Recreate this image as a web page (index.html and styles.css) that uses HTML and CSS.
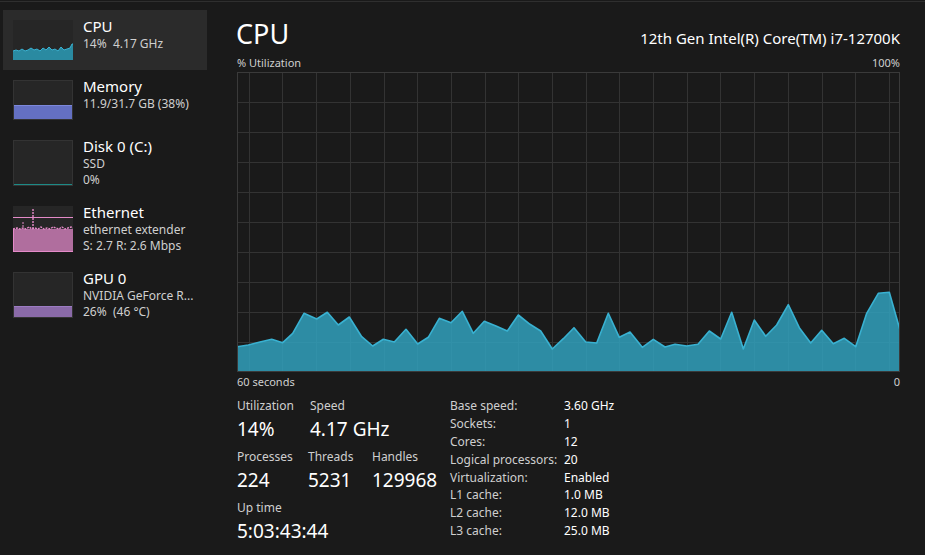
FILE: index.html
```html
<!DOCTYPE html>
<html lang="en">
<head>
    <meta charset="UTF-8">
    <meta name="viewport" content="width=device-width, initial-scale=1.0">
    <title>Task Manager - Performance</title>
    <link rel="stylesheet" href="styles.css">
</head>
<body>

<div class="app">
    <!-- device list -->
    <div class="sidebar">
        <div class="item selected">
            <svg class="thumb" width="60" height="40" viewBox="0 0 60 40">
                <polygon fill="#2a8aa1" points="0,31 3,30 6,31 9,29 12,31 15,30 18,28 21,30 24,29 27,31 30,28 33,30 36,27 39,30 42,29 45,31 48,27 51,30 54,29 57,28 59,24 60,24 60,40 0,40"/>
                <polyline fill="none" stroke="#3ab2d2" stroke-width="1" points="0,31 3,30 6,31 9,29 12,31 15,30 18,28 21,30 24,29 27,31 30,28 33,30 36,27 39,30 42,29 45,31 48,27 51,30 54,29 57,28 59,24 60,24"/>
            </svg>
            <div class="info">
                <div class="name">CPU</div>
                <div class="sub">14%&nbsp; 4.17 GHz</div>
            </div>
        </div>

        <div class="item">
            <div class="thumb box">
                <div class="fill mem" style="height: 38%"></div>
            </div>
            <div class="info">
                <div class="name">Memory</div>
                <div class="sub">11.9/31.7 GB (38%)</div>
            </div>
        </div>

        <div class="item tall">
            <div class="thumb box">
                <div class="fill disk" style="height: 1px"></div>
            </div>
            <div class="info">
                <div class="name">Disk 0 (C:)</div>
                <div class="sub">SSD</div>
                <div class="sub">0%</div>
            </div>
        </div>

        <div class="item tall">
            <svg class="thumb box" width="60" height="46" viewBox="0 0 60 46">
                <rect x="0" y="23" width="60" height="23" fill="#b06e9e"/>
                <polyline fill="none" stroke="#e48ac8" stroke-width="1.4" stroke-dasharray="2 1" points="0,23 4,22 7,23 10,22 13,23 16,21 19,23 22,22 25,23 28,21 31,23 34,22 37,23 40,21 43,22 46,23 49,21 52,23 55,22 58,21 60,22"/>
                <line x1="0" y1="11.5" x2="60" y2="11.5" stroke="#e48ac8" stroke-width="1"/>
                <line x1="20" y1="3" x2="20" y2="23" stroke="#e48ac8" stroke-width="1.4" stroke-dasharray="2 1"/>
                <line x1="10" y1="16" x2="10" y2="23" stroke="#e48ac8" stroke-width="1" stroke-dasharray="2 1"/>
                <line x1="0.5" y1="23" x2="0.5" y2="46" stroke="#e48ac8" stroke-width="1"/>
                <line x1="0" y1="45.5" x2="60" y2="45.5" stroke="#e48ac8" stroke-width="1"/>
            </svg>
            <div class="info">
                <div class="name">Ethernet</div>
                <div class="sub">ethernet extender</div>
                <div class="sub">S: 2.7 R: 2.6 Mbps</div>
            </div>
        </div>

        <div class="item tall">
            <div class="thumb box">
                <div class="fill gpu" style="height: 26%"></div>
            </div>
            <div class="info">
                <div class="name">GPU 0</div>
                <div class="sub">NVIDIA GeForce R...</div>
                <div class="sub">26%&nbsp; (46 °C)</div>
            </div>
        </div>
    </div>

    <!-- selected device details -->
    <div class="main">
        <div class="header">
            <div class="title">CPU</div>
            <div class="model">12th Gen Intel(R) Core(TM) i7-12700K</div>
        </div>

        <div class="axis top">
            <span>% Utilization</span>
            <span>100%</span>
        </div>

        <svg class="graph" id="graph" width="663" height="300" viewBox="0 0 663 300"></svg>

        <div class="axis">
            <span>60 seconds</span>
            <span>0</span>
        </div>

        <div class="details">
            <div class="stats">
                <div class="row">
                    <div class="stat w73"><div class="label">Utilization</div><div class="value">14%</div></div>
                    <div class="stat"><div class="label">Speed</div><div class="value">4.17 GHz</div></div>
                </div>
                <div class="row">
                    <div class="stat w71"><div class="label">Processes</div><div class="value">224</div></div>
                    <div class="stat w64"><div class="label">Threads</div><div class="value">5231</div></div>
                    <div class="stat"><div class="label">Handles</div><div class="value">129968</div></div>
                </div>
                <div class="row">
                    <div class="stat"><div class="label">Up time</div><div class="value">5:03:43:44</div></div>
                </div>
            </div>

            <div class="specs">
                <div class="key">Base speed:</div><div>3.60 GHz</div>
                <div class="key">Sockets:</div><div>1</div>
                <div class="key">Cores:</div><div>12</div>
                <div class="key">Logical processors:</div><div>20</div>
                <div class="key">Virtualization:</div><div>Enabled</div>
                <div class="key">L1 cache:</div><div>1.0 MB</div>
                <div class="key">L2 cache:</div><div>12.0 MB</div>
                <div class="key">L3 cache:</div><div>25.0 MB</div>
            </div>
        </div>
    </div>
</div>

<script>
    // last 60 samples of cpu usage, y in graph pixels (300 = 0%)
    var samples = [
        [0,274.7],[11.3,273],[23,270],[34.7,267.3],[45.7,270.7],[55.7,261.3],[67,241.3],[79.7,247],[90.3,240.3],
        [101.3,253],[112.3,245],[124.7,264.7],[135.7,274],[146.3,267.3],[157.3,270],[169,257.3],[180.7,272],
        [191.3,265.3],[202.3,246.3],[214,250.7],[225.3,239.3],[236.3,261.3],[247.3,249.3],[259,254],[270.3,259],
        [281.3,243],[293,252.3],[303.7,259],[315.3,277],[326.3,266.7],[337,255.7],[348.7,270],[359.7,271],
        [371.3,241.3],[382.3,265.3],[393,260],[405.3,275.3],[416.3,267.3],[428,275],[438,272.3],[449.7,274],
        [461,272.3],[472.3,259],[483.7,267],[494.7,240.3],[506.3,277],[517.3,248],[528.7,264.3],[539.7,253],
        [551.3,232.7],[562.3,255.7],[573.7,271],[584.7,258.3],[596.3,271.7],[607.3,266.3],[618.7,274.7],
        [629.7,241.3],[641.3,221.3],[652.3,220.3],[663,258]
    ];

    var svg = document.getElementById("graph");
    var html = "";

    // grid
    for (var y = 30; y < 300; y += 30) {
        html += '<line class="grid" x1="0" y1="' + (y + 0.5) + '" x2="663" y2="' + (y + 0.5) + '"/>';
    }
    for (var x = 11.7; x < 663; x += 33.7) {
        var gx = Math.round(x) + 0.5;
        html += '<line class="grid" x1="' + gx + '" y1="0" x2="' + gx + '" y2="300"/>';
    }

    var pts = samples.map(function (p) { return p[0] + "," + p[1]; }).join(" ");
    html += '<polygon class="area" points="0,300 ' + pts + ' 663,300"/>';
    html += '<polyline class="line" points="' + pts + '"/>';
    html += '<rect class="frame" x="0.5" y="0.5" width="662" height="299"/>';

    svg.innerHTML = html;
</script>

</body>
</html>
```

FILE: styles.css
```css
body { margin: 0; background: #1a1a1a; color: #fff; font-family: "Noto Sans", "Open Sans", sans-serif; overflow: hidden; }
.app { display: flex; margin-top: 1px; border-top: 1px solid #2f2f2f; height: 553px; }

.sidebar { width: 204px; padding: 8px 15px 0 3px; }
.item { display: flex; height: 60px; padding: 0 10px; box-sizing: border-box; }
.item.tall { height: 66px; }
.item.selected { background: #2b2b2b; }
.thumb { flex: none; width: 60px; height: 40px; margin-top: 10px; background: #262626; display: block; }
.item.tall .thumb { height: 46px; }
.box { position: relative; box-sizing: border-box; border: 1px solid #333; display: flex; flex-direction: column; justify-content: flex-end; }
.fill { width: 100%; box-sizing: border-box; }
.fill.mem { background: #6470c2; border-top: 1px solid #7c88dc; }
.fill.disk { background: #1d8a86; }
.fill.gpu { background: #8a6aa8; border-top: 1px solid #9c7cc4; }
svg.box { border: none; }

.info { margin-left: 10px; padding-top: 6px; white-space: nowrap; }
.name { font-size: 15px; line-height: 20px; }
.sub { font-size: 12px; line-height: 16px; color: #cfcfcf; }

.main { width: 663px; padding-left: 15px; }
.header { display: flex; justify-content: space-between; align-items: baseline; height: 50px; }
.title { font-size: 27px; line-height: 40px; margin-left: -1px; padding-top: 12px; }
.model { font-size: 15px; }
.axis { display: flex; justify-content: space-between; font-size: 11px; line-height: 20px; color: #cfcfcf; }
.axis.top { height: 20px; line-height: 22px; }
.graph { display: block; }
.grid { stroke: #333; stroke-width: 1; }
.frame { fill: none; stroke: #3a3a3a; stroke-width: 1; }
.area { fill: #31a0bb; opacity: 0.86; }
.line { fill: none; stroke: #39b1d1; stroke-width: 1.6; stroke-linejoin: round; }

.details { display: flex; margin-top: 6px; }
.stats { width: 213px; }
.row { display: flex; }
.stat { margin-bottom: 7px; }
.w73 { width: 73px; }
.w71 { width: 71px; }
.w64 { width: 64px; }
.label { font-size: 12px; line-height: 16px; color: #cfcfcf; }
.value { font-size: 19px; line-height: 26px; padding-top: 2px; }
.specs { display: grid; grid-template-columns: 114px auto; grid-auto-rows: 17.9px; align-content: start; font-size: 12px; line-height: 17.9px; margin-top: -1px; }
.specs .key { color: #cfcfcf; }
```
